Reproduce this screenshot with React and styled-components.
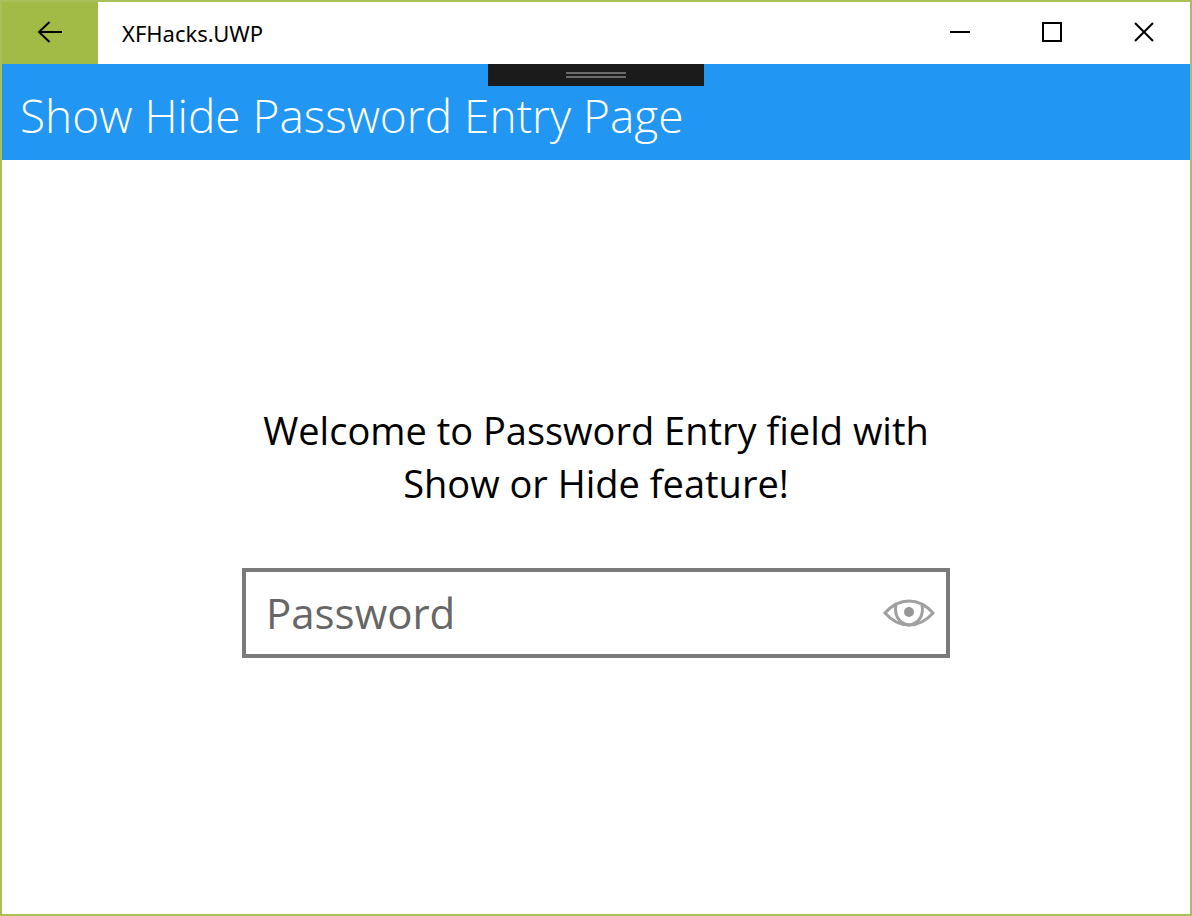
import React, { useState } from "react";
import styled, { createGlobalStyle } from "styled-components";

const GlobalStyle = createGlobalStyle`
  * {
    box-sizing: border-box;
  }
  body {
    margin: 0;
    background: #ffffff;
    color: #000000;
    font-family: "Open Sans", "Noto Sans", sans-serif;
  }
`;

const Window = styled.div`
  display: flex;
  flex-direction: column;
  min-height: 100vh;
  border: 2px solid #a9c05a;
`;

const TitleBar = styled.header`
  display: flex;
  height: 62px;
`;

const BarButton = styled.button`
  display: flex;
  align-items: center;
  justify-content: center;
  width: ${(p) => (p.$accent ? 96 : 92)}px;
  padding: 0 0 2px;
  border: 0;
  background: ${(p) => (p.$accent ? "#a2ba46" : "transparent")};
`;

const AppName = styled.div`
  flex: 1;
  padding-left: 24px;
  font-family: "Noto Sans", "Open Sans", sans-serif;
  font-size: 22px;
  line-height: 62px;
`;

const NavBar = styled.div`
  position: relative;
  height: 96px;
  padding: 0 18px;
  background: #2196f3;
`;

const PageTitle = styled.h1`
  margin: 0;
  color: #ffffff;
  font-size: 46px;
  font-weight: 300;
  line-height: 102px;
  white-space: nowrap;
`;

const DebugHandle = styled.div`
  position: absolute;
  top: 0;
  left: 50%;
  display: flex;
  flex-direction: column;
  align-items: center;
  gap: 2px;
  width: 216px;
  height: 22px;
  padding-top: 8px;
  background: #1b1b1b;
  transform: translateX(-50%);
`;

const Grip = styled.span`
  width: 60px;
  height: 2px;
  background: #6a6a6a;
`;

const Main = styled.main`
  display: flex;
  flex: 1;
  flex-direction: column;
  align-items: center;
  justify-content: center;
  padding: 0 24px 12px;
`;

const Form = styled.form`
  display: flex;
  flex-direction: column;
  gap: 58px;
  width: 100%;
  max-width: 708px;
`;

const Welcome = styled.label`
  font-size: 38px;
  line-height: 53px;
  text-align: center;
`;

const Entry = styled.div`
  display: flex;
  align-items: center;
  height: 90px;
  padding: 0 10px 0 20px;
  border: 4px solid #7a7a7a;
`;

const PasswordInput = styled.input`
  flex: 1;
  min-width: 0;
  height: 80px;
  padding: 0 0 2px;
  border: 0;
  outline: 0;
  background: transparent;
  color: #000000;
  font-family: inherit;
  font-size: 42px;
  &::placeholder {
    color: #666666;
    opacity: 1;
  }
`;

const RevealButton = styled.button`
  display: flex;
  padding: 0;
  border: 0;
  background: transparent;
`;

export default function App() {
  const [shown, setShown] = useState(false);
  return (
    <Window>
      <GlobalStyle />
      <TitleBar>
        <BarButton $accent aria-label="Back">
          <svg width="26" height="24" viewBox="0 0 26 24" fill="none" stroke="#000" strokeWidth="2">
            <path d="M25 12H2M12.500 2L2 12l10.500 10" />
          </svg>
        </BarButton>
        <AppName>XFHacks.UWP</AppName>
        <BarButton aria-label="Minimize">
          <svg width="20" height="20" stroke="#000" strokeWidth="2">
            <path d="M0 10H20" />
          </svg>
        </BarButton>
        <BarButton aria-label="Maximize">
          <svg width="20" height="20" fill="none" stroke="#000" strokeWidth="2">
            <rect x="1" y="1" width="18" height="18" />
          </svg>
        </BarButton>
        <BarButton aria-label="Close">
          <svg width="20" height="20" stroke="#000" strokeWidth="2">
            <path d="M1 1L19 19M19 1L1 19" />
          </svg>
        </BarButton>
      </TitleBar>
      <NavBar>
        <PageTitle>Show Hide Password Entry Page</PageTitle>
        <DebugHandle>
          <Grip />
          <Grip />
        </DebugHandle>
      </NavBar>
      <Main>
        <Form onSubmit={(e) => e.preventDefault()}>
          <Welcome htmlFor="password">
            Welcome to Password Entry field with Show or Hide feature!
          </Welcome>
          <Entry>
            <PasswordInput id="password" type={shown ? "text" : "password"} placeholder="Password" />
            <RevealButton type="button" aria-label="Show password" onClick={() => setShown(!shown)}>
              <svg width="54" height="32" viewBox="0 0 54 32" fill="none" stroke="#a0a0a0" strokeWidth="3">
                <path d="M3 16C10 8 18 4 27 4s17 4 24 12c-7 8-15 12-24 12S10 24 3 16z" />
                <path d="M14 8C12 18 17 27 27 28C37 27 42 18 40 8" />
                <circle cx="27" cy="15" r="5" fill="#969696" stroke="none" />
              </svg>
            </RevealButton>
          </Entry>
        </Form>
      </Main>
    </Window>
  );
}
